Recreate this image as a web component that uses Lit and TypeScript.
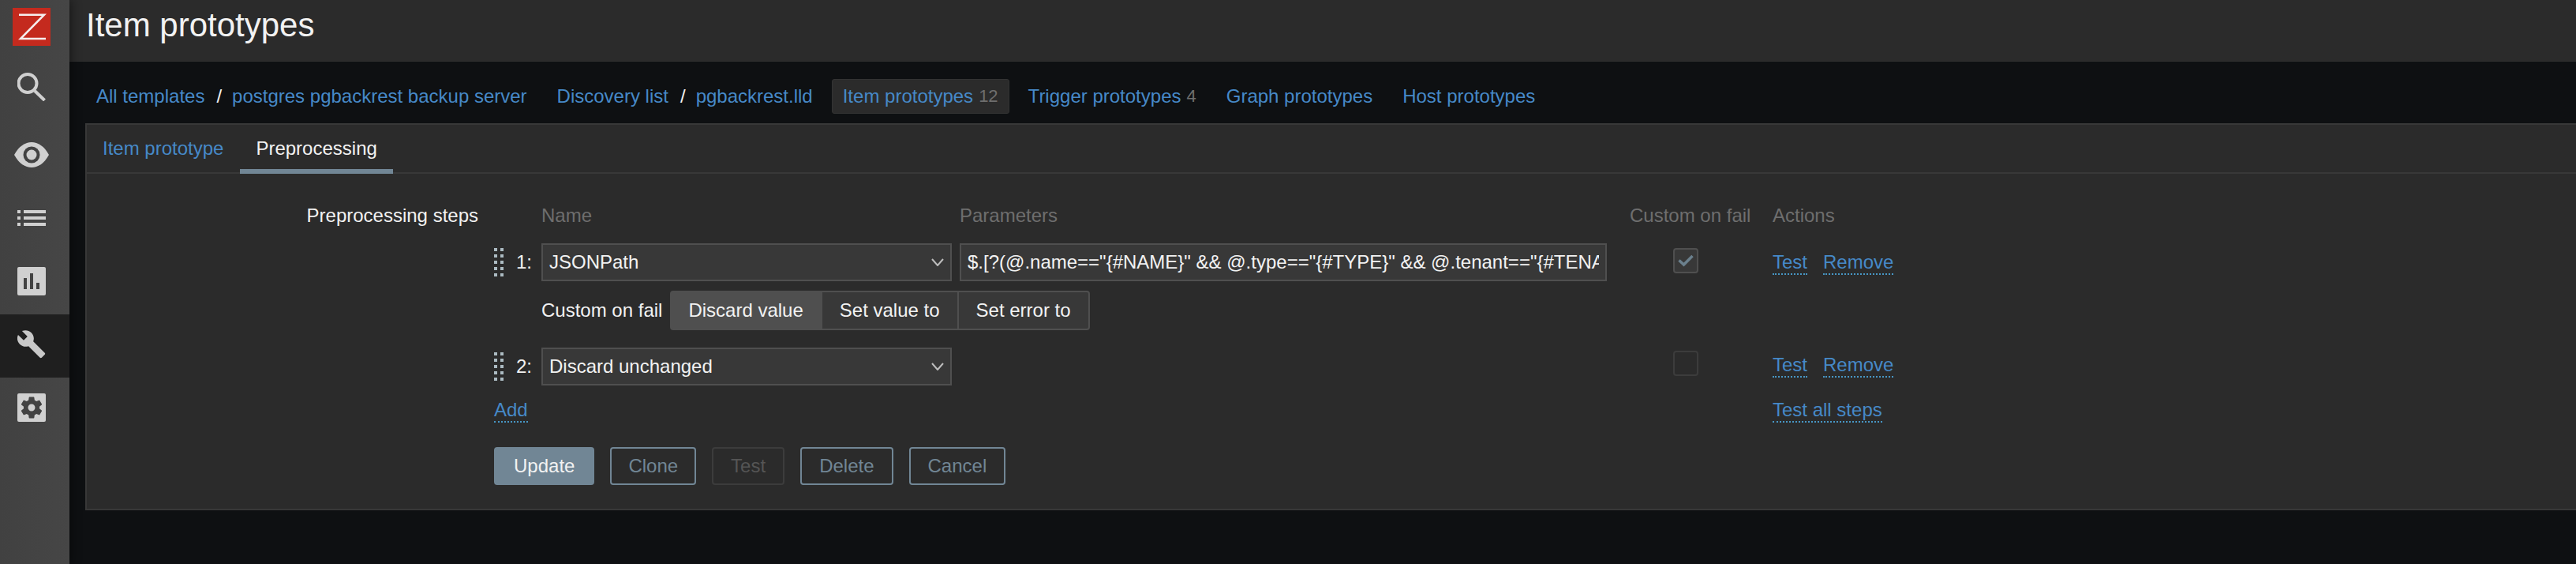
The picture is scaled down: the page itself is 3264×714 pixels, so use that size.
import { LitElement, html, css, svg } from "lit";
import { customElement } from "lit/decorators.js";

const icons = {
  search: svg`<svg width="36" height="36" viewBox="0 0 36 36" fill="none" stroke="#d0d0d0"><circle cx="13" cy="13.500" r="11.500" stroke-width="4"/><path d="M22 23 L34.500 35" stroke-width="4"/></svg>`,
  eye: svg`<svg width="44" height="32" viewBox="0 0 44 32"><path fill="#d0d0d0" d="M0 16C6 5 14 0 22 0s16 5 22 16c-6 11-14 16-22 16S6 27 0 16z"/><circle cx="22" cy="16" r="10.500" fill="#434343"/><circle cx="22" cy="16" r="6.500" fill="#d0d0d0"/></svg>`,
  list: svg`<svg width="36" height="20" viewBox="0 0 36 20" fill="#d0d0d0"><path d="M0 0h4v4H0zM8 0h28v4H8zM0 8h4v4H0zM8 8h28v4H8zM0 16h4v4H0zM8 16h28v4H8z"/></svg>`,
  chart: svg`<svg width="36" height="36" viewBox="0 0 36 36"><rect width="36" height="36" rx="2" fill="#d0d0d0"/><path fill="#434343" d="M8 14h4v14H8zM16 8h4v20h-4zM24 20h4v8h-4z"/></svg>`,
  wrench: svg`<svg width="36" height="36" viewBox="1 1 22.500 22.500"><path fill="#c8c8c8" d="M22.700 19l-9.100-9.100c.9-2.300.4-5-1.500-6.900-2-2-5-2.400-7.400-1.300L9 6 6 9 1.600 4.700C.4 7.100.9 10.100 2.900 12.100c1.900 1.900 4.600 2.400 6.900 1.500l9.100 9.100c.4.400 1 .4 1.400 0l2.300-2.300c.5-.4.500-1.100.1-1.400z"/></svg>`,
  gear: svg`<svg width="36" height="36" viewBox="0 0 36 36"><rect width="36" height="36" rx="2" fill="#d0d0d0"/><g transform="translate(1.200 1.200) scale(1.400)"><path fill="#434343" fill-rule="evenodd" d="M19.140 12.940c.04-.3.06-.61.06-.94 0-.32-.02-.64-.07-.94l2.030-1.580c.18-.14.23-.41.12-.61l-1.920-3.320c-.12-.22-.37-.29-.59-.22l-2.390.96c-.5-.38-1.030-.7-1.620-.94l-.36-2.540c-.04-.24-.24-.41-.48-.41h-3.840c-.24 0-.43.17-.47.41l-.36 2.540c-.59.24-1.130.57-1.620.94l-2.390-.96c-.22-.08-.47 0-.59.22L2.740 8.870c-.12.21-.08.47.12.61l2.030 1.580c-.05.3-.09.63-.09.94s.02.64.07.94l-2.030 1.580c-.18.14-.23.41-.12.61l1.920 3.320c.12.22.37.29.59.22l2.390-.96c.5.38 1.030.7 1.620.94l.36 2.540c.05.24.24.41.48.41h3.840c.24 0 .44-.17.47-.41l.36-2.540c.59-.24 1.130-.56 1.620-.94l2.390.96c.22.08.47 0 .59-.22l1.920-3.320c.12-.22.07-.47-.12-.61l-2.010-1.580zM12 15.200c-1.770 0-3.200-1.430-3.200-3.200s1.430-3.200 3.200-3.200 3.200 1.430 3.200 3.200-1.430 3.200-3.200 3.200z"/></g></svg>`,
  logo: svg`<svg width="48" height="48" viewBox="0 0 48 48"><rect width="48" height="48" fill="#c42a1e"/><path fill="none" stroke="#f6eeee" stroke-width="2.500" d="M8 8.700H40L10 39H42"/></svg>`,
  chevron: svg`<svg width="16" height="10" viewBox="0 0 16 10" fill="none" stroke="#bdbdbd" stroke-width="2"><path d="M1 1l7 8 7-8"/></svg>`,
  check: svg`<svg width="20" height="16" viewBox="0 0 20 16" fill="none" stroke="#6b808d" stroke-width="3.500"><path d="M1.500 7.500L7.500 13 18.500 2"/></svg>`,
};

@customElement("app-root")
export class AppRoot extends LitElement {
  static styles = css`
    :host { display: block; font-family: "Liberation Sans", Arial, sans-serif; font-size: 24px; line-height: 28px; color: #f2f2f2; background: #0e1012; min-height: 714px; }
    * { box-sizing: border-box; }
    a { color: #4689c8; text-decoration: none; }
    .app { display: flex; min-height: 714px; }
    .side { width: 88px; flex: none; background: linear-gradient(90deg, #414141, #464646); box-shadow: 2px 0 12px rgba(0,0,0,.45); position: relative; }
    .logo { height: 78px; padding: 10px 16px 0; }
    .logo svg, .ico svg { display: block; }
    .ico { height: 80px; display: flex; align-items: center; justify-content: center; padding: 0 8px 4px 0; }
    .ico.search { padding-bottom: 16px; }
    .ico.active { background: #1f1f1f; }
    .main { flex: 1; min-width: 0; }
    .head { height: 78px; background: #2b2b2b; padding: 7px 21px 0; border-bottom: 1px solid #313131; }
    h1 { margin: 0; font-size: 42px; font-weight: 400; line-height: 50px; color: #f2f2f2; }
    .crumbs { height: 78px; display: flex; align-items: flex-start; padding: 22px 0 0 20px; }
    .crumb { display: flex; height: 44px; padding: 0 13px; align-items: center; white-space: pre; border: 1px solid transparent; border-radius: 3px; margin-right: 10px; }
    .crumb .sep { color: #f2f2f2; margin: 0 13px 0 15px; }
    .crumb.on { background: #2b2b2b; border-color: #333; }
    .count { color: #6e6e6e; margin-left: 7px; font-size: 22px; }
    .panel { margin-left: 20px; background: #2b2b2b; border: solid #383838; border-width: 2px 0 2px 2px; height: 490px; }
    .tabs { display: flex; height: 62px; border-bottom: 2px solid #383838; }
    .tab { height: 62px; padding: 16px 20px 0; margin-right: 1px; }
    .tab.on { color: #f2f2f2; border-bottom: 6px solid #718695; }
    .form { display: grid; grid-template-columns: 496px 1fr; column-gap: 20px; padding-top: 39px; }
    .lbl { text-align: right; }
    .cols { display: flex; color: #6e6e6e; margin-left: 60px; height: 28px; margin-bottom: 21px; }
    .c-name { width: 530px; }
    .c-param { width: 849px; }
    .c-cof { width: 181px; }
    .step { display: flex; align-items: flex-start; height: 48px; }
    .hand { width: 60px; height: 48px; display: flex; padding-top: 6px; }
    .grip { width: 12px; height: 36px; display: grid; grid-template-columns: 4px 4px; gap: 4px; }
    .grip i { width: 4px; height: 4px; background: #acbbc2; }
    .num { width: 48px; text-align: right; padding-top: 4px; margin-left: -12px; }
    .sel { width: 520px; height: 48px; margin-right: 10px; background: #383838; border: 2px solid #4f4f4f; padding: 0 8px; display: flex; justify-content: space-between; align-items: center; }
    input { width: 820px; height: 48px; background: #383838; border: 2px solid #4f4f4f; padding: 0 8px; color: #f2f2f2; font: inherit; outline: none; }
    .blank { width: 820px; flex: none; }
    .box { width: 32px; height: 32px; margin: 6px 0 0 84px; background: #383838; border: 2px solid #4f4f4f; border-radius: 4px; display: flex; align-items: center; justify-content: center; }
    .box.off { background: #2b2b2b; border-color: #3c3c3c; }
    .second .box { margin-top: 4px; }
    .acts { display: flex; gap: 20px; margin: 10px 0 0 94px; }
    .second .acts { margin-top: 8px; }
    .dot { display: inline-block; border-bottom: 2px dotted #4796c4; height: 30px; }
    .fail { display: flex; align-items: center; margin: 12px 0 22px 60px; height: 50px; }
    .seg { display: flex; margin-left: 10px; height: 50px; }
    .seg div { padding: 9px 22px 0; background: #383838; border: 2px solid #4f4f4f; border-left-width: 0; }
    .seg div:first-child { background: #4f4f4f; border-left-width: 2px; border-radius: 4px 0 0 4px; padding-left: 21px; }
    .seg div:last-child { border-radius: 0 4px 4px 0; }
    .foot { display: flex; margin-top: 17px; height: 31px; }
    .f-add { width: 1620px; }
    .btns { display: flex; gap: 20px; margin-top: 30px; }
    .btn { height: 48px; padding: 8px 22px 0; border: 2px solid #718695; border-radius: 4px; color: #718695; text-align: center; }
    .btn.pri { background: #718695; color: #f2f2f2; padding: 8px 23px 0; }
    .btn.clone { padding: 8px 21px 0; }
    .btn.dis { border-color: #3c3c3c; color: #555; }
  `;

  private grip() {
    return html`<div class="grip">${Array.from({ length: 10 }, () => html`<i></i>`)}</div>`;
  }

  render() {
    const param = '$.[?(@.name=="{#NAME}" && @.type=="{#TYPE}" && @.tenant=="{#TENANT}")].first()';
    return html`
      <div class="app">
        <nav class="side">
          <div class="logo">${icons.logo}</div>
          <div class="ico search">${icons.search}</div>
          <div class="ico">${icons.eye}</div>
          <div class="ico">${icons.list}</div>
          <div class="ico">${icons.chart}</div>
          <div class="ico active">${icons.wrench}</div>
          <div class="ico">${icons.gear}</div>
        </nav>
        <div class="main">
          <header class="head"><h1>Item prototypes</h1></header>
          <div class="crumbs">
            <div class="crumb"><a>All templates</a><span class="sep">/</span><a>postgres pgbackrest backup server</a></div>
            <div class="crumb"><a>Discovery list</a><span class="sep">/</span><a>pgbackrest.lld</a></div>
            <div class="crumb on"><a>Item prototypes</a><span class="count">12</span></div>
            <div class="crumb"><a>Trigger prototypes</a><span class="count">4</span></div>
            <div class="crumb"><a>Graph prototypes</a></div>
            <div class="crumb"><a>Host prototypes</a></div>
          </div>
          <section class="panel">
            <div class="tabs">
              <a class="tab">Item prototype</a>
              <div class="tab on">Preprocessing</div>
            </div>
            <div class="form">
              <div class="lbl">Preprocessing steps</div>
              <div>
                <div class="cols">
                  <div class="c-name">Name</div>
                  <div class="c-param">Parameters</div>
                  <div class="c-cof">Custom on fail</div>
                  <div>Actions</div>
                </div>
                <div class="step">
                  <div class="hand">${this.grip()}<div class="num">1:</div></div>
                  <div class="sel"><span>JSONPath</span>${icons.chevron}</div>
                  <input readonly .value=${param} />
                  <div class="box">${icons.check}</div>
                  <div class="acts"><a class="dot">Test</a><a class="dot">Remove</a></div>
                </div>
                <div class="fail">
                  <span>Custom on fail</span>
                  <div class="seg"><div>Discard value</div><div>Set value to</div><div>Set error to</div></div>
                </div>
                <div class="step second">
                  <div class="hand">${this.grip()}<div class="num">2:</div></div>
                  <div class="sel"><span>Discard unchanged</span>${icons.chevron}</div>
                  <div class="blank"></div>
                  <div class="box off"></div>
                  <div class="acts"><a class="dot">Test</a><a class="dot">Remove</a></div>
                </div>
                <div class="foot"><div class="f-add"><a class="dot">Add</a></div><a class="dot">Test all steps</a></div>
                <div class="btns">
                  <div class="btn pri">Update</div>
                  <div class="btn clone">Clone</div>
                  <div class="btn dis">Test</div>
                  <div class="btn">Delete</div>
                  <div class="btn">Cancel</div>
                </div>
              </div>
            </div>
          </section>
        </div>
      </div>
    `;
  }
}
